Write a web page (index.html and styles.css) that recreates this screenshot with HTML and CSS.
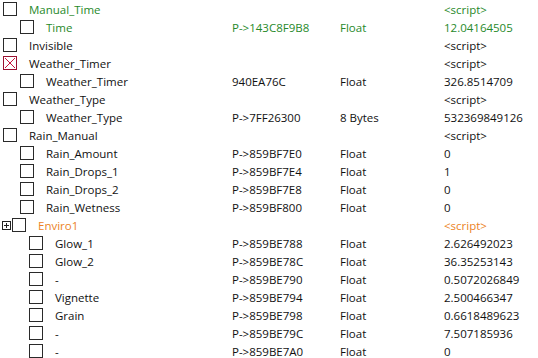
FILE: index.html
```html
<!DOCTYPE html>
<html>
<head>
<meta charset="utf-8">
<link rel="stylesheet" href="styles.css">
</head>
<body>
<div class="list">
  <div class="row green"><div class="tree l0"><span class="cb"></span><span class="name">Manual_Time</span></div><div></div><div></div><div>&lt;script&gt;</div></div>
  <div class="row green"><div class="tree l1"><span class="cb"></span><span class="name">Time</span></div><div>P-&gt;143C8F9B8</div><div>Float</div><div>12.04164505</div></div>
  <div class="row"><div class="tree l0"><span class="cb"></span><span class="name">Invisible</span></div><div></div><div></div><div>&lt;script&gt;</div></div>
  <div class="row"><div class="tree l0"><span class="cb x"><svg width="14" height="14" viewBox="0 0 14 14"><path d="M2 2 L12 12 M12 2 L2 12" stroke="#c8143c" stroke-width="1"/></svg></span><span class="name">Weather_Timer</span></div><div></div><div></div><div>&lt;script&gt;</div></div>
  <div class="row"><div class="tree l1"><span class="cb"></span><span class="name">Weather_Timer</span></div><div>940EA76C</div><div>Float</div><div>326.8514709</div></div>
  <div class="row"><div class="tree l0"><span class="cb"></span><span class="name">Weather_Type</span></div><div></div><div></div><div>&lt;script&gt;</div></div>
  <div class="row"><div class="tree l1"><span class="cb"></span><span class="name">Weather_Type</span></div><div>P-&gt;7FF26300</div><div>8 Bytes</div><div>532369849126</div></div>
  <div class="row"><div class="tree l0"><span class="cb"></span><span class="name">Rain_Manual</span></div><div></div><div></div><div>&lt;script&gt;</div></div>
  <div class="row"><div class="tree l1"><span class="cb"></span><span class="name">Rain_Amount</span></div><div>P-&gt;859BF7E0</div><div>Float</div><div>0</div></div>
  <div class="row"><div class="tree l1"><span class="cb"></span><span class="name">Rain_Drops_1</span></div><div>P-&gt;859BF7E4</div><div>Float</div><div>1</div></div>
  <div class="row"><div class="tree l1"><span class="cb"></span><span class="name">Rain_Drops_2</span></div><div>P-&gt;859BF7E8</div><div>Float</div><div>0</div></div>
  <div class="row"><div class="tree l1"><span class="cb"></span><span class="name">Rain_Wetness</span></div><div>P-&gt;859BF800</div><div>Float</div><div>0</div></div>
  <div class="row orange"><div class="tree le"><span class="exp"><svg width="9" height="9" viewBox="0 0 9 9"><rect x="0.5" y="0.5" width="8" height="8" fill="#fff" stroke="#222"/><path d="M2 4.5 H7 M4.5 2 V7" stroke="#222"/></svg></span><span class="cb"></span><span class="name">Enviro1</span></div><div></div><div></div><div>&lt;script&gt;</div></div>
  <div class="row"><div class="tree l2"><span class="cb"></span><span class="name">Glow_1</span></div><div>P-&gt;859BE788</div><div>Float</div><div>2.626492023</div></div>
  <div class="row"><div class="tree l2"><span class="cb"></span><span class="name">Glow_2</span></div><div>P-&gt;859BE78C</div><div>Float</div><div>36.35253143</div></div>
  <div class="row"><div class="tree l2"><span class="cb"></span><span class="name">-</span></div><div>P-&gt;859BE790</div><div>Float</div><div>0.5072026849</div></div>
  <div class="row"><div class="tree l2"><span class="cb"></span><span class="name">Vignette</span></div><div>P-&gt;859BE794</div><div>Float</div><div>2.500466347</div></div>
  <div class="row"><div class="tree l2"><span class="cb"></span><span class="name">Grain</span></div><div>P-&gt;859BE798</div><div>Float</div><div>0.6618489623</div></div>
  <div class="row"><div class="tree l2"><span class="cb"></span><span class="name">-</span></div><div>P-&gt;859BE79C</div><div>Float</div><div>7.507185936</div></div>
  <div class="row"><div class="tree l2"><span class="cb"></span><span class="name">-</span></div><div>P-&gt;859BE7A0</div><div>Float</div><div>0</div></div>
</div>
</body>
</html>
```
FILE: styles.css
```css
html, body {
  margin: 0;
  padding: 0;
  background: #fff;
}
body {
  font-family: "Open Sans", "Noto Sans", "DejaVu Sans", sans-serif;
  font-size: 11.5px;
  color: #111;
  width: 538px;
  height: 358px;
  overflow: hidden;
}
.list {
  display: flex;
  flex-direction: column;
}
.row {
  display: grid;
  grid-template-columns: 232px 108px 104px 1fr;
  height: 18px;
  align-items: center;
  white-space: nowrap;
}
.green { color: #27892a; }
.orange { color: #ec8326; }
.tree {
  display: flex;
  align-items: center;
  height: 18px;
}
.l0 { padding-left: 3px; }
.l1 { padding-left: 20px; }
.l2 { padding-left: 29px; }
.le { padding-left: 2px; }
.cb {
  box-sizing: border-box;
  width: 14px;
  height: 14px;
  border: 1px solid #2a2a2a;
  background: #fff;
  flex: none;
  position: relative;
}
.cb.x {
  border-color: #9a1030;
}
.cb.x svg {
  position: absolute;
  left: -1px;
  top: -1px;
}
.exp {
  width: 9px;
  height: 9px;
  margin-right: 1px;
  display: flex;
}
.name {
  margin-left: 12px;
}
```
